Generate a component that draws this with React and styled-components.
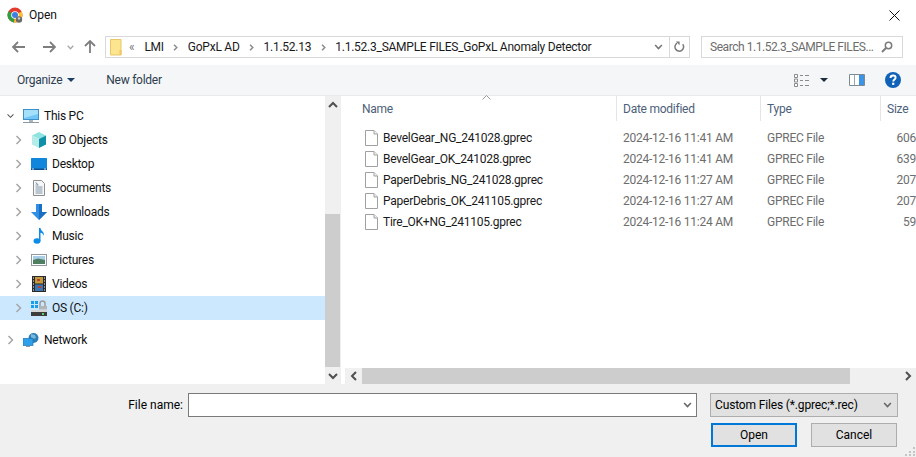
import React from 'react';
import styled, { createGlobalStyle } from 'styled-components';

const FONT = `Roboto, 'Open Sans', 'Liberation Sans', sans-serif`;

const GlobalStyle = createGlobalStyle`
  html, body {
    margin: 0;
    padding: 0;
    background: #fff;
  }
  * {
    box-sizing: border-box;
  }
`;

const FILES = [
  { name: 'BevelGear_NG_241028.gprec', date: '2024-12-16 11:41 AM', size: '606' },
  { name: 'BevelGear_OK_241028.gprec', date: '2024-12-16 11:41 AM', size: '639' },
  { name: 'PaperDebris_NG_241028.gprec', date: '2024-12-16 11:27 AM', size: '207' },
  { name: 'PaperDebris_OK_241105.gprec', date: '2024-12-16 11:27 AM', size: '207' },
  { name: 'Tire_OK+NG_241105.gprec', date: '2024-12-16 11:24 AM', size: '59' },
];

const CRUMBS = ['LMI', 'GoPxL AD', '1.1.52.13', '1.1.52.3_SAMPLE FILES_GoPxL Anomaly Detector'];

const ChromeIcon = () => (
  <svg width="17" height="17" viewBox="0 0 17 17">
    <circle cx="8" cy="8" r="7.5" fill="#e33b2e" />
    <path d="M8 8 L1.5 4.2 A7.5 7.5 0 0 0 7 15.4 Z" fill="#2f9e44" />
    <path d="M8 8 L14.7 4.6 A7.5 7.5 0 0 1 7 15.4 Z" fill="#fbc02d" />
    <circle cx="8" cy="8" r="3.8" fill="#fff" />
    <circle cx="8" cy="8" r="3" fill="#3f7fe0" />
    <circle cx="12" cy="12.5" r="3.2" fill="#6b6b6b" />
    <circle cx="12" cy="11.4" r="1.2" fill="#cfcfcf" />
  </svg>
);

const CloseIcon = () => (
  <svg width="11" height="11" viewBox="0 0 11 11">
    <path d="M.5.5l10 10M10.5.5l-10 10" stroke="#111" strokeWidth="1" fill="none" />
  </svg>
);

const BackIcon = ({ flip }) => (
  <svg width="14" height="12" viewBox="0 0 14 12" style={flip ? { transform: 'scaleX(-1)' } : undefined}>
    <path d="M1 6h12M6 1L1 6l5 5" stroke="#7e7e7e" strokeWidth="1.8" fill="none" />
  </svg>
);

const UpIcon = () => (
  <svg width="12" height="14" viewBox="0 0 12 14">
    <path d="M6 13V1M1 6l5-5 5 5" stroke="#7e7e7e" strokeWidth="1.8" fill="none" />
  </svg>
);

const SmallChevron = ({ color = '#9a9a9a', width = 7, height = 5 }) => (
  <svg width={width} height={height} viewBox="0 0 7 5">
    <path d="M.7.8L3.5 3.8 6.3.8" stroke={color} strokeWidth="1.3" fill="none" />
  </svg>
);

const CrumbChevron = () => (
  <svg width="5" height="7" viewBox="0 0 5 7">
    <path d="M1 .8L3.8 3.500 1 6.200" stroke="#8c8c8c" strokeWidth="1.500" fill="none" />
  </svg>
);

const FolderIcon = () => (
  <svg width="12" height="17" viewBox="0 0 12 17">
    <path d="M.5.5h10.5v15.500H.5z" fill="#fde58f" stroke="#e9c766" />
    <path d="M9.500 11h2v5h-2z" fill="#f0c75e" />
  </svg>
);

const RefreshIcon = () => (
  <svg width="11" height="12" viewBox="0 0 11 12">
    <path d="M8.700 3.200A4.300 4.300 0 1 1 3 2.200" stroke="#7b7b7b" strokeWidth="1.500" fill="none" />
    <path d="M1.800.4h3.800v3.800z" fill="#7b7b7b" />
  </svg>
);

const SearchIcon = () => (
  <svg width="12" height="12" viewBox="0 0 12 12">
    <circle cx="7.500" cy="4.500" r="3.200" stroke="#7c7c7c" strokeWidth="1.500" fill="none" />
    <path d="M5 7L1 11" stroke="#7c7c7c" strokeWidth="2" />
  </svg>
);

const Caret = ({ color = '#1b3f66' }) => (
  <svg width="8" height="4" viewBox="0 0 8 4">
    <path d="M0 0h8L4 4z" fill={color} />
  </svg>
);

const ViewsIcon = () => (
  <svg width="16" height="13" viewBox="0 0 16 13">
    <path d="M.5.500h3v3h-3zM.5 5h3v3h-3zM.5 9.500h3v3h-3z" fill="#fff" stroke="#8a8a8a" />
    <path d="M6 1.500h3M11 1.500h4M6 6.500h3M11 6.500h4M6 11.500h3M11 11.500h4" stroke="#8a8a8a" />
  </svg>
);

const PaneIcon = () => (
  <svg width="16" height="12" viewBox="0 0 16 12">
    <path d="M.5.500h15v11H.5z" fill="#fff" stroke="#7e8a94" />
    <path d="M10 1h5v10h-5z" fill="#3e94e4" />
    <path d="M5.500 1v10" stroke="#9aa5ae" />
  </svg>
);

const HelpIcon = () => (
  <svg width="16" height="16" viewBox="0 0 16 16">
    <circle cx="8" cy="8" r="8" fill="#0f62b8" />
    <path d="M5.500 6c0-1.600 1.100-2.500 2.600-2.500S10.600 4.400 10.600 5.700C10.600 7.500 8.200 7.500 8.200 9.600" stroke="#fff" strokeWidth="1.900" fill="none" />
    <rect x="7.100" y="10.700" width="2.200" height="2.200" fill="#fff" />
  </svg>
);

const PcIcon = () => (
  <svg width="16" height="15" viewBox="0 0 16 15">
    <rect x=".5" y=".5" width="15" height="10" fill="#6fc6f7" stroke="#3f8fc9" />
    <path d="M1 1h14v4L1 9z" fill="#a5e0fb" />
    <path d="M6 11h4v2H6z" fill="#a9b6bf" />
    <path d="M0 13.500h16" stroke="#8b9aa5" />
  </svg>
);

const CubeIcon = () => (
  <svg width="16" height="16" viewBox="0 0 16 16">
    <path d="M8 0l7 3.500-7 3.500-7-3.500z" fill="#8fe3e0" />
    <path d="M1 3.500l7 3.500v9l-7-3.500z" fill="#b5ece8" />
    <path d="M15 3.500L8 7v9l7-3.500z" fill="#0f8fa8" />
  </svg>
);

const DesktopIcon = () => (
  <svg width="16" height="12" viewBox="0 0 16 12">
    <rect width="16" height="12" rx=".5" fill="#0f86dc" />
    <rect y="10.500" width="16" height="1.500" fill="#0b4f8c" />
    <path d="M1 11h2M13 11h2" stroke="#cfe8fb" />
  </svg>
);

const DocIcon = () => (
  <svg width="12" height="16" viewBox="0 0 12 16">
    <path d="M.5.500h8l3 3v12H.5z" fill="#f7f7f7" stroke="#8f8f8f" />
    <path d="M2.500 5h3M2.500 7h7M2.500 9h7M2.500 11h7M2.500 13h7" stroke="#7d96ab" />
    <path d="M3 2.500l1.500 2" stroke="#3b7fc4" />
  </svg>
);

const DownloadIcon = () => (
  <svg width="16" height="16" viewBox="0 0 16 16">
    <path d="M5 0h6v8h5l-8 8-8-8h5z" fill="#2f8fe6" />
    <path d="M8 0h3v8h5l-8 8z" fill="#1a6fc0" />
  </svg>
);

const MusicIcon = () => (
  <svg width="12" height="16" viewBox="0 0 12 16">
    <ellipse cx="4" cy="13" rx="3.500" ry="2.800" fill="#0d8be8" />
    <path d="M6 0h1.500c.3 3 4 3.500 3.500 8-.5-2-2-3-3.500-3.300V13H6z" fill="#0d8be8" />
  </svg>
);

const PictureIcon = () => (
  <svg width="16" height="12" viewBox="0 0 16 12">
    <rect x=".5" y=".5" width="15" height="11" fill="#fff" stroke="#8e9aa3" />
    <rect x="2" y="2" width="12" height="4" fill="#a9cde6" />
    <path d="M2 6l5-1.500L14 6v4H2z" fill="#4f7f63" />
  </svg>
);

const VideoIcon = () => (
  <svg width="14" height="16" viewBox="0 0 14 16">
    <rect width="14" height="16" fill="#2b2b2b" />
    <rect x="3" y="1" width="8" height="6.500" fill="#c39b3a" />
    <rect x="3" y="8.500" width="8" height="6.500" fill="#3d76b5" />
    <path d="M1 2h1M1 5h1M1 8h1M1 11h1M1 14h1M12 2h1M12 5h1M12 8h1M12 11h1M12 14h1" stroke="#fff" />
    <path d="M5 3h3v2H5zM6 10h3v2H6z" fill="#b5432e" />
  </svg>
);

const DriveIcon = () => (
  <svg width="16" height="16" viewBox="0 0 16 16">
    <path d="M0 1h3v3H0zM4 1h3v3H4zM0 5h3v3H0zM4 5h3v3H4z" fill="#16a0ea" />
    <path d="M9 7V3.500a2.500 2.500 0 0 1 5 0V7" stroke="#9c9c9c" strokeWidth="1.500" fill="none" />
    <rect x="8" y="6" width="8" height="3.500" fill="#b5b5b5" />
    <rect y="10" width="16" height="2" fill="#d6d6d6" />
    <rect y="12" width="16" height="4" fill="#3d3d3d" />
    <rect x="11" y="13" width="2" height="2" fill="#55d36a" />
  </svg>
);

const NetworkIcon = () => (
  <svg width="16" height="15" viewBox="0 0 16 15">
    <circle cx="10.500" cy="5" r="5" fill="#2f7fb5" />
    <path d="M8 1l4 1 1 3-3 1-2-2z" fill="#7ab8dd" />
    <rect y="5.500" width="10" height="7" fill="#2ea0ea" stroke="#1876b8" strokeWidth=".7" />
    <path d="M3 13h4v1H3z" fill="#8b9aa5" />
  </svg>
);

const FileIcon = () => (
  <svg width="13" height="16" viewBox="0 0 13 16">
    <path d="M.5.500h8.500l3.500 3.500v11.500H.5z" fill="#fff" stroke="#a0a0a0" />
    <path d="M9 .5V4h3.500" fill="#f1f1f1" stroke="#a0a0a0" />
  </svg>
);

const TreeChevron = ({ open }) => (
  <svg width="7" height={open ? 6 : 10} viewBox={open ? '0 0 9 6' : '0 0 6 10'}>
    {open ? (
      <path d="M.7.800L4.500 4.600 8.300.800" stroke="#555" strokeWidth="1.300" fill="none" />
    ) : (
      <path d="M1 1l4 4-4 4" stroke="#a6a6a6" strokeWidth="1.500" fill="none" />
    )}
  </svg>
);

const ScrollArrow = ({ dir }) => {
  const paths = {
    up: 'M1 6l4-4 4 4',
    down: 'M1 2l4 4 4-4',
    left: 'M6 1L2 5l4 4',
    right: 'M2 1l4 4-4 4',
  };
  return (
    <svg width="10" height="10" viewBox={dir === 'up' || dir === 'down' ? '0 0 10 8' : '0 0 8 10'}>
      <path d={paths[dir]} stroke="#505050" strokeWidth="2" fill="none" />
    </svg>
  );
};

const GRID = () => (
  <svg width="10" height="10" viewBox="0 0 10 10">
    <path d="M8 1h2v2H8zM4 5h2v2H4zM8 5h2v2H8zM0 8h2v2H0zM4 8h2v2H4zM8 8h2v2H8z" fill="#c4c4c4" />
  </svg>
);

const NAV = [
  { label: 'This PC', icon: <PcIcon />, top: true, open: true },
  { label: '3D Objects', icon: <CubeIcon /> },
  { label: 'Desktop', icon: <DesktopIcon /> },
  { label: 'Documents', icon: <DocIcon /> },
  { label: 'Downloads', icon: <DownloadIcon /> },
  { label: 'Music', icon: <MusicIcon /> },
  { label: 'Pictures', icon: <PictureIcon /> },
  { label: 'Videos', icon: <VideoIcon /> },
  { label: 'OS (C:)', icon: <DriveIcon />, selected: true },
];

const App = () => {
  return (
    <>
      <GlobalStyle />
      <Dialog>
        <TitleBar>
          <TitleLeft>
            <ChromeIcon />
            <TitleText>Open</TitleText>
          </TitleLeft>
          <CloseIcon />
        </TitleBar>

        <AddressRow>
          <NavButtons>
            <BackIcon />
            <BackIcon flip />
            <SmallChevron color="#a8a8a8" />
            <UpIcon />
          </NavButtons>
          <AddressBox>
            <FolderIcon />
            <Overflow>«</Overflow>
            {CRUMBS.map((crumb) => (
              <Crumb key={crumb}>
                <CrumbText>{crumb}</CrumbText>
                {crumb !== CRUMBS[CRUMBS.length - 1] && (
                  <CrumbArrow>
                    <CrumbChevron />
                  </CrumbArrow>
                )}
              </Crumb>
            ))}
            <AddressEnd>
              <SmallChevron color="#777" width={9} height={6} />
              <RefreshCell>
                <RefreshIcon />
              </RefreshCell>
            </AddressEnd>
          </AddressBox>
          <SearchBox>
            <SearchText>Search 1.1.52.3_SAMPLE FILES...</SearchText>
            <SearchIcon />
          </SearchBox>
        </AddressRow>

        <Toolbar>
          <ToolbarLeft>
            <ToolButton>
              Organize <Caret />
            </ToolButton>
            <ToolButton>New folder</ToolButton>
          </ToolbarLeft>
          <ToolbarRight>
            <ViewsGroup>
              <ViewsIcon />
              <Caret color="#1d2a3a" />
            </ViewsGroup>
            <PaneIcon />
            <HelpIcon />
          </ToolbarRight>
        </Toolbar>

        <Body>
          <NavPane>
            <Tree>
              {NAV.map((item) => (
                <TreeRow key={item.label} $top={item.top} $selected={item.selected}>
                  <ChevronSlot>
                    <TreeChevron open={item.open} />
                  </ChevronSlot>
                  <IconSlot>{item.icon}</IconSlot>
                  <TreeLabel>{item.label}</TreeLabel>
                </TreeRow>
              ))}
              <NetworkGap />
              <TreeRow $top>
                <ChevronSlot>
                  <TreeChevron />
                </ChevronSlot>
                <IconSlot>
                  <NetworkIcon />
                </IconSlot>
                <TreeLabel>Network</TreeLabel>
              </TreeRow>
            </Tree>
            <VScroll>
              <ScrollButton>
                <ScrollArrow dir="up" />
              </ScrollButton>
              <VTrack>
                <VThumb />
              </VTrack>
              <ScrollButton>
                <ScrollArrow dir="down" />
              </ScrollButton>
            </VScroll>
          </NavPane>

          <ListPane>
            <SortCaret>
              <svg width="9" height="5" viewBox="0 0 9 5">
                <path d="M.5 4.500l4-4 4 4" stroke="#9a9a9a" fill="none" />
              </svg>
            </SortCaret>
            <HeaderRow>
              <HeaderCell $w={272} $pad={17}>Name</HeaderCell>
              <HeaderCell $w={144} $pad={6}>Date modified</HeaderCell>
              <HeaderCell $w={120} $pad={6}>Type</HeaderCell>
              <HeaderCell $w={36} $pad={6} $last>Size</HeaderCell>
            </HeaderRow>
            <Rows>
              {FILES.map((file) => (
                <FileRow key={file.name}>
                  <NameCell>
                    <FileIcon />
                    <FileName>{file.name}</FileName>
                  </NameCell>
                  <DateCell>{file.date}</DateCell>
                  <TypeCell>GPREC File</TypeCell>
                  <SizeCell>{file.size}</SizeCell>
                </FileRow>
              ))}
            </Rows>
            <HScroll>
              <ScrollButton $h>
                <ScrollArrow dir="left" />
              </ScrollButton>
              <HTrack>
                <HThumb />
              </HTrack>
              <ScrollButton $h>
                <ScrollArrow dir="right" />
              </ScrollButton>
            </HScroll>
          </ListPane>
        </Body>

        <Footer>
          <FileNameRow>
            <FieldLabel>File name:</FieldLabel>
            <NameInput>
              <SmallChevron color="#666" width={9} height={6} />
            </NameInput>
            <TypeSelect>
              <span>Custom Files (*.gprec;*.rec)</span>
              <SmallChevron color="#666" width={9} height={6} />
            </TypeSelect>
          </FileNameRow>
          <ButtonRow>
            <DialogButton $primary>Open</DialogButton>
            <DialogButton>Cancel</DialogButton>
          </ButtonRow>
          <Grip>
            <GRID />
          </Grip>
        </Footer>
      </Dialog>
    </>
  );
};

const Dialog = styled.div`
  position: relative;
  width: 916px;
  height: 457px;
  overflow: hidden;
  display: flex;
  flex-direction: column;
  background: #fff;
  font-family: ${FONT};
  font-size: 12px;
  letter-spacing: -0.25px;
  color: #000;
`;

const TitleBar = styled.div`
  height: 30px;
  flex: none;
  display: flex;
  align-items: center;
  justify-content: space-between;
  padding: 0 16px 0 7px;
`;

const TitleLeft = styled.div`
  display: flex;
  align-items: center;
  gap: 5px;
`;

const TitleText = styled.span`
  color: #111;
  letter-spacing: 0;
`;

const AddressRow = styled.div`
  height: 35px;
  flex: none;
  display: flex;
  align-items: flex-start;
  padding: 6px 13px 0 12px;
`;

const NavButtons = styled.div`
  width: 93px;
  height: 22px;
  flex: none;
  display: grid;
  grid-template-columns: 30px 25px 17px 14px;
  align-items: center;
  justify-items: start;
`;

const AddressBox = styled.div`
  width: 585px;
  height: 22px;
  flex: none;
  display: flex;
  align-items: center;
  padding-left: 4px;
  border: 1px solid #d9d9d9;
`;

const Overflow = styled.span`
  margin: 0 10px 0 7px;
  color: #777;
`;

const Crumb = styled.span`
  display: flex;
  align-items: center;
  white-space: nowrap;
`;

const CrumbText = styled.span`
  color: #1a1a1a;
`;

const CrumbArrow = styled.span`
  width: 24px;
  display: flex;
  align-items: center;
  justify-content: center;
`;

const AddressEnd = styled.div`
  margin-left: auto;
  height: 100%;
  display: flex;
  align-items: center;
  gap: 6px;
`;

const RefreshCell = styled.div`
  width: 20px;
  height: 100%;
  display: flex;
  align-items: center;
  justify-content: center;
  border-left: 1px solid #d9d9d9;
`;

const SearchBox = styled.div`
  width: 202px;
  height: 22px;
  flex: none;
  margin-left: 11px;
  display: flex;
  align-items: center;
  justify-content: space-between;
  padding: 0 9px 0 8px;
  border: 1px solid #d9d9d9;
`;

const SearchText = styled.span`
  color: #6d6d6d;
  letter-spacing: -0.45px;
  white-space: nowrap;
`;

const Toolbar = styled.div`
  height: 31px;
  flex: none;
  display: flex;
  align-items: center;
  justify-content: space-between;
  padding: 0 15px 0 17px;
  background: #f5f6f7;
  border-bottom: 1px solid #eaeaea;
`;

const ToolbarLeft = styled.div`
  display: flex;
  align-items: center;
  gap: 31px;
`;

const ToolButton = styled.span`
  display: flex;
  align-items: center;
  gap: 5px;
  color: #2d3e50;
`;

const ToolbarRight = styled.div`
  display: flex;
  align-items: center;
  gap: 20px;
`;

const ViewsGroup = styled.div`
  display: flex;
  align-items: center;
  gap: 10px;
  margin-right: 1px;
`;

const Body = styled.div`
  flex: 1;
  min-height: 0;
  display: flex;
`;

const NavPane = styled.div`
  width: 341px;
  flex: none;
  display: flex;
  border-right: 1px solid #eee;
`;

const Tree = styled.div`
  width: 325px;
  flex: none;
  padding-top: 8px;
`;

const TreeRow = styled.div`
  height: 24px;
  display: flex;
  align-items: center;
  padding-left: ${(p) => (p.$top ? 7 : 15)}px;
  background: ${(p) => (p.$selected ? '#cce8ff' : 'transparent')};
`;

const NetworkGap = styled.div`
  height: 8px;
`;

const ChevronSlot = styled.span`
  width: 16px;
  flex: none;
  display: flex;
  align-items: center;
`;

const IconSlot = styled.span`
  width: 16px;
  height: 16px;
  flex: none;
  display: flex;
  align-items: center;
  justify-content: center;
`;

const TreeLabel = styled.span`
  margin-left: 5px;
  color: #111;
  white-space: nowrap;
`;

const VScroll = styled.div`
  width: 15px;
  flex: none;
  display: flex;
  flex-direction: column;
  background: #f0f0f0;
`;

const ScrollButton = styled.div`
  flex: none;
  width: ${(p) => (p.$h ? '17px' : 'auto')};
  height: ${(p) => (p.$h ? 'auto' : '17px')};
  display: flex;
  align-items: center;
  justify-content: center;
  background: #f0f0f0;
`;

const VTrack = styled.div`
  flex: 1;
  display: flex;
  flex-direction: column;
  justify-content: flex-end;
`;

const VThumb = styled.div`
  height: 153px;
  background: #cdcdcd;
`;

const ListPane = styled.div`
  position: relative;
  flex: 1;
  min-width: 0;
  display: flex;
  flex-direction: column;
  margin-left: 4px;
`;

const SortCaret = styled.span`
  position: absolute;
  top: -1px;
  left: 137px;
  line-height: 0;
`;

const HeaderRow = styled.div`
  height: 25px;
  flex: none;
  display: flex;
`;

const HeaderCell = styled.div`
  width: ${(p) => p.$w}px;
  flex: none;
  padding-left: ${(p) => p.$pad}px;
  display: flex;
  align-items: center;
  color: #4c607a;
  border-right: ${(p) => (p.$last ? 'none' : '1px solid #e5e5e5')};
`;

const Rows = styled.div`
  flex: 1;
  min-height: 0;
  padding-top: 6px;
`;

const FileRow = styled.div`
  height: 21px;
  display: grid;
  grid-template-columns: 272px 144px 113px 42px;
  align-items: center;
  white-space: nowrap;
`;

const NameCell = styled.div`
  display: flex;
  align-items: center;
  gap: 5px;
  padding-left: 20px;
`;

const FileName = styled.span`
  color: #1a1a1a;
`;

const DateCell = styled.div`
  padding-left: 6px;
  color: #6d6d6d;
`;

const TypeCell = styled.div`
  padding-left: 6px;
  color: #6d6d6d;
`;

const SizeCell = styled.div`
  text-align: right;
  color: #6d6d6d;
`;

const HScroll = styled.div`
  height: 16px;
  flex: none;
  display: flex;
  background: #f0f0f0;
`;

const HTrack = styled.div`
  flex: 1;
  padding-right: 49px;
`;

const HThumb = styled.div`
  height: 100%;
  background: #cdcdcd;
`;

const Footer = styled.div`
  position: relative;
  height: 73px;
  flex: none;
  background: #f0f0f0;
  padding-top: 9px;
`;

const FileNameRow = styled.div`
  height: 24px;
  display: flex;
  align-items: center;
`;

const FieldLabel = styled.span`
  width: 188px;
  flex: none;
  padding-right: 5px;
  text-align: right;
  letter-spacing: 0;
`;

const NameInput = styled.div`
  width: 509px;
  height: 24px;
  flex: none;
  display: flex;
  align-items: center;
  justify-content: flex-end;
  padding-right: 4px;
  background: #fff;
  border: 1px solid #7a7a7a;
`;

const TypeSelect = styled.div`
  width: 188px;
  height: 24px;
  flex: none;
  margin-left: 13px;
  display: flex;
  align-items: center;
  justify-content: space-between;
  padding: 0 5px 0 4px;
  background: #e1e1e1;
  border: 1px solid #adadad;
  letter-spacing: -0.15px;
`;

const ButtonRow = styled.div`
  display: flex;
  justify-content: flex-end;
  gap: 14px;
  margin-top: 6px;
  padding-right: 19px;
`;

const DialogButton = styled.div`
  width: 86px;
  height: 24px;
  display: flex;
  align-items: center;
  justify-content: center;
  background: #e1e1e1;
  border: ${(p) => (p.$primary ? '2px solid #0078d7' : '1px solid #adadad')};
  letter-spacing: 0;
`;

const Grip = styled.span`
  position: absolute;
  right: 1px;
  bottom: 1px;
  line-height: 0;
`;

export default App;
